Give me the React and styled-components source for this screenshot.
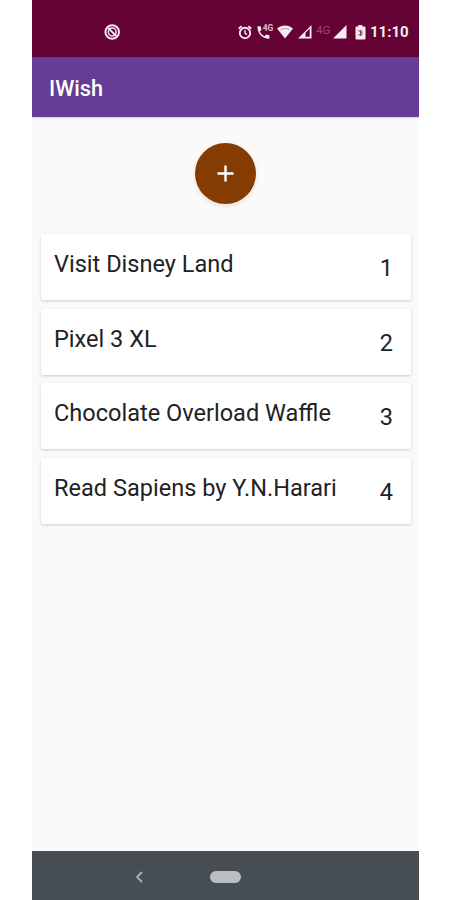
import React from 'react';
import styled, { createGlobalStyle } from 'styled-components';

const GlobalStyle = createGlobalStyle`
* {
    box-sizing: border-box;
    margin: 0;
    padding: 0;
}

body {
    background: #ffffff;
    font-family: Roboto, sans-serif;
}
`

const Phone = styled.div`
    display: flex;
    flex-direction: column;
    width: 387px;
    height: 900px;
    margin-left: 32px;
    background: #fafafa;
    overflow: hidden;
`

const StatusBar = styled.div`
    display: flex;
    align-items: center;
    height: 57px;
    padding: 7px 10px 0 72px;
    background: #640233;
    color: #f8eaf1;

    svg {
        display: block;
        flex: none;
    }
`

const StatusIcons = styled.div`
    display: flex;
    align-items: center;
    margin-left: auto;
`

const IconSlot = styled.span`
    display: flex;
    width: ${props => props.$width}px;
    margin-right: ${props => props.$gap || 0}px;
`

const Network = styled.span`
    width: 15px;
    margin-right: 2px;
    font-size: 11.5px;
    line-height: 14px;
    height: 18px;
    color: #9b4a75;
`

const Clock = styled.span`
    width: 39px;
    font-size: 15px;
    font-weight: 700;
    line-height: 18px;
    white-space: nowrap;
`

const AppBar = styled.header`
    display: flex;
    align-items: center;
    height: 60px;
    padding: 3px 17px 0;
    background: #663d94;
    box-shadow: 0 1px 2px rgba(0, 0, 0, 0.16);

    h1 {
        color: #ffffff;
        font-size: 21.7px;
        font-weight: 500;
        line-height: 28px;
    }
`

const Content = styled.main`
    flex: 1;
    padding: 26px 8px 0 9px;
`

const AddButton = styled.button`
    display: flex;
    align-items: center;
    justify-content: center;
    width: 61px;
    height: 61px;
    margin: 0 0 30px 154px;
    border: 0;
    border-radius: 50%;
    background: #843c02;
    box-shadow: 0 2px 5px rgba(0, 0, 0, 0.1);
`

const WishList = styled.ul`
    display: flex;
    flex-direction: column;
    gap: 8.7px;
    list-style: none;
`

const Wish = styled.li`
    display: flex;
    justify-content: space-between;
    height: 66px;
    padding: 16px 18px 0 13px;
    border-radius: 2px;
    background: #ffffff;
    color: #222222;
    font-size: 23.55px;
    line-height: 28px;
    box-shadow: 0 1px 3px rgba(0, 0, 0, 0.19);
`

const Rank = styled.span`
    padding-top: 4px;
`

const NavBar = styled.nav`
    display: flex;
    align-items: center;
    height: 49px;
    padding: 2px 0 0 103px;
    background: #464e53;
`

const HomePill = styled.span`
    width: 31px;
    height: 12px;
    margin-left: 67px;
    border-radius: 6px;
    background: #b9bfc2;
`

const BlockedIcon = () => (
    <svg width="17" height="17" viewBox="0 0 17 17" fill="none" stroke="currentColor">
        <circle cx="8.2" cy="8" r="6.8" strokeWidth="2" />
        <circle cx="8.2" cy="8" r="3.9" strokeWidth="1.5" />
        <path d="M4.2 4l8 8" strokeWidth="1.8" />
    </svg>
)

const AlarmIcon = () => (
    <svg width="15" height="15" viewBox="0 0 15 15" fill="none" stroke="currentColor" strokeWidth="1.9">
        <circle cx="7" cy="8" r="5.2" />
        <path d="M.7 3.800l3-2.700M13.300 3.800l-3-2.700" />
        <path d="M7 5.100v3.200l2.200 1.300" strokeWidth="1.400" />
    </svg>
)

const CallIcon = () => (
    <svg width="17" height="16" viewBox="0 0 17 16" fill="currentColor">
        <path d="M.4 2.300h3.200l.9 3.600-1.700 1.700c1 2.200 2.500 3.600 4.700 4.600l1.700-1.800 3.200.9v3.400C5.600 15 .4 10 .4 2.300z" />
        <text x="5.800" y="7.400" fontSize="8.500" fontWeight="700" textLength="10.500" lengthAdjust="spacingAndGlyphs" opacity="0.8">4G</text>
    </svg>
)

const WifiIcon = () => (
    <svg width="17" height="14" viewBox="0 0 17 14">
        <path d="M0 3.600C4.700-.4 11.300-.4 16 3.600L8 13.600z" fill="currentColor" />
        <path d="M3.500 4.900c2.900-1.800 6.100-1.800 9 0" fill="none" stroke="#640233" strokeWidth="0.6" opacity="0.6" />
    </svg>
)

const SignalIcon = ({ weak }) => (
    <svg width="14" height="14" viewBox="0 0 14 14" fill="currentColor">
        <path d="M0 13.500L13.500 0v13.500z" />
        {weak && <path d="M7.500 7.800L11.700 3.600v8.200H7.500z" fill="#640233" />}
    </svg>
)

const BatteryIcon = () => (
    <svg width="11" height="15" viewBox="0 0 11 15" fill="currentColor">
        <path d="M3.300 0h4v1.600H9.500q1 0 1 1V13.500q0 1-1 1h-8q-1 0-1-1V2.600q0-1 1-1h1.800z" />
        <path d="M3 5l4.500 4-2 2V5.200l2 1.800L3.200 10.700" fill="none" stroke="#8b4266" strokeWidth="1" />
    </svg>
)

const PlusIcon = () => (
    <svg width="17" height="17" viewBox="0 0 17 17" stroke="#ffffff" strokeWidth="2.4">
        <path d="M8.500.5v16M.5 8.500h16" />
    </svg>
)

const BackIcon = () => (
    <svg width="8" height="12" viewBox="0 0 8 12" fill="none" stroke="#a9b0b3" strokeWidth="1.8">
        <path d="M7 1L2 6l5 5" />
    </svg>
)

const wishes = [
    'Visit Disney Land',
    'Pixel 3 XL',
    'Chocolate Overload Waffle',
    'Read Sapiens by Y.N.Harari',
]

const App = () => {
    return (
        <>
            <GlobalStyle />
            <Phone>
                <StatusBar>
                    <BlockedIcon />
                    <StatusIcons>
                        <IconSlot $width={15} $gap={4}><AlarmIcon /></IconSlot>
                        <IconSlot $width={17} $gap={3}><CallIcon /></IconSlot>
                        <IconSlot $width={17} $gap={4}><WifiIcon /></IconSlot>
                        <IconSlot $width={14} $gap={4}><SignalIcon weak /></IconSlot>
                        <Network>4G</Network>
                        <IconSlot $width={14} $gap={8}><SignalIcon /></IconSlot>
                        <IconSlot $width={11} $gap={4}><BatteryIcon /></IconSlot>
                        <Clock>11:10</Clock>
                    </StatusIcons>
                </StatusBar>
                <AppBar>
                    <h1>IWish</h1>
                </AppBar>
                <Content>
                    <AddButton aria-label="Add wish"><PlusIcon /></AddButton>
                    <WishList>
                        {wishes.map((wish, i) => (
                            <Wish key={wish}>
                                <span>{wish}</span>
                                <Rank>{i + 1}</Rank>
                            </Wish>
                        ))}
                    </WishList>
                </Content>
                <NavBar>
                    <BackIcon />
                    <HomePill />
                </NavBar>
            </Phone>
        </>
    )
}

export default App
